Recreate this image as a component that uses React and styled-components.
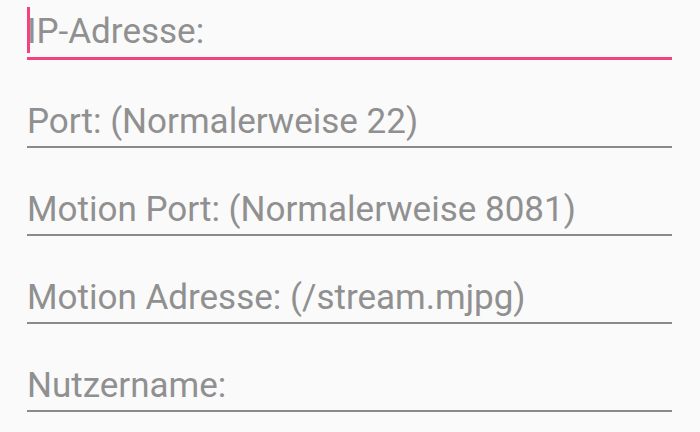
import React from "react";
import styled, { createGlobalStyle } from "styled-components";

const fields = [
  { hint: "IP-Adresse:", focused: true },
  { hint: "Port: (Normalerweise 22)" },
  { hint: "Motion Port: (Normalerweise 8081)" },
  { hint: "Motion Adresse: (/stream.mjpg)" },
  { hint: "Nutzername:" },
];

const App = () => {
  return (
    <StForm>
      {fields.map((f) => (
        <StField key={f.hint} $focused={f.focused}>
          {f.focused && <StCursor />}
          <StHint>{f.hint}</StHint>
        </StField>
      ))}
    </StForm>
  );
};

export default App;

const GlobalStyle = createGlobalStyle`
  html, body {
    margin: 0;
    padding: 0;
    background: #fafafa;
  }
`;

const StFormBase = styled.div`
  box-sizing: border-box;
  width: 700px;
  height: 432px;
  overflow: hidden;
  padding: 14px 28px 0 27px;
  display: flex;
  flex-direction: column;
  gap: 44px;
  font-family: Roboto, "Noto Sans", sans-serif;
`;

const StForm = ({ children }) => (
  <>
    <GlobalStyle />
    <StFormBase>{children}</StFormBase>
  </>
);

// focused field: thicker accent underline; every field is 88px apart
const StField = styled.div`
  position: relative;
  padding-bottom: ${(p) => (p.$focused ? "7px" : "6px")};
  border-bottom: ${(p) => (p.$focused ? "3px solid #f4417f" : "2px solid #8a8a8a")};
`;

const StHint = styled.div`
  font-size: 35px;
  line-height: 36px;
  height: 36px;
  color: #909090;
  white-space: nowrap;
`;

const StCursor = styled.div`
  position: absolute;
  left: 0;
  top: -7px;
  width: 3px;
  height: 46px;
  background: #f4417f;
`;
